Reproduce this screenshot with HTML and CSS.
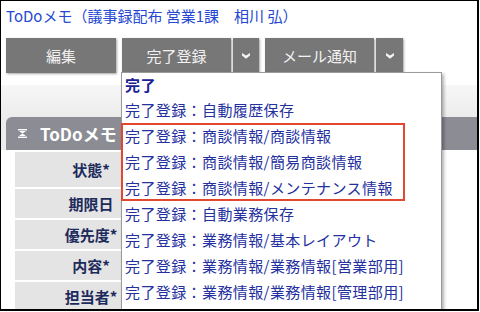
FILE: index.html
```html
<!DOCTYPE html>
<html lang="ja">
<head>
    <meta charset="UTF-8">
    <meta name="viewport" content="width=device-width, initial-scale=1.0">
    <title>ToDoメモ</title>
    <link rel="stylesheet" href="styles.css">
</head>
<body>
  <div class="frame">
    <h1 class="page-title">ToDoメモ（議事録配布 営業1課　相川 弘）</h1>

    <div class="toolbar">
      <button type="button" class="btn btn-edit">編集</button>

      <div class="split">
        <button type="button" class="btn btn-main">完了登録</button>
        <button type="button" class="btn btn-caret">
          <svg width="8" height="6" viewBox="0 0 8 6"><path d="M0 0 L4 2.6 L8 0 L8 2.4 L4 5.8 L0 2.4 Z" fill="#f4f4f4"/></svg>
        </button>

        <div class="menu">
          <div class="menu-item menu-head">完了</div>
          <div class="menu-item">完了登録：自動履歴保存</div>
          <div class="menu-group">
            <div class="menu-item">完了登録：商談情報/商談情報</div>
            <div class="menu-item">完了登録：商談情報/簡易商談情報</div>
            <div class="menu-item">完了登録：商談情報/メンテナンス情報</div>
          </div>
          <div class="menu-item">完了登録：自動業務保存</div>
          <div class="menu-item">完了登録：業務情報/基本レイアウト</div>
          <div class="menu-item">完了登録：業務情報/業務情報[営業部用]</div>
          <div class="menu-item">完了登録：業務情報/業務情報[管理部用]</div>
        </div>
      </div>

      <div class="split">
        <button type="button" class="btn btn-main">メール通知</button>
        <button type="button" class="btn btn-caret btn-caret-wide">
          <svg width="8" height="6" viewBox="0 0 8 6"><path d="M0 0 L4 2.6 L8 0 L8 2.4 L4 5.8 L0 2.4 Z" fill="#f4f4f4"/></svg>
        </button>
      </div>
    </div>

    <div class="band"></div>

    <section class="panel">
      <div class="panel-bar">
        <div class="panel-head">
          <svg class="collapse-icon" width="9" height="9" viewBox="0 0 9 9">
            <rect x="0" y="0" width="9" height="1.4" fill="#fff"/>
            <path d="M1 2 L8 2 L4.5 4.4 Z" fill="#fff"/>
            <path d="M1 7 L8 7 L4.5 4.6 Z" fill="#fff"/>
            <rect x="0" y="7.6" width="9" height="1.4" fill="#fff"/>
          </svg>
          <span>ToDoメモ</span>
        </div>
      </div>

      <div class="rows">
        <div class="row row-first"><div class="label">状態*</div></div>
        <div class="row"><div class="label">期限日</div></div>
        <div class="row"><div class="label">優先度*</div></div>
        <div class="row"><div class="label">内容*</div></div>
        <div class="row"><div class="label">担当者*</div></div>
      </div>
    </section>
  </div>
</body>
</html>
```

FILE: styles.css
```css
body {
    margin: 0;
    padding: 0;
    background-color: #fff;
    font-family: "Noto Sans CJK JP", "Noto Sans", sans-serif;
}
.frame {
    box-sizing: border-box;
    width: 479px;
    height: 311px;
    border: 1px solid #000;
    border-right-width: 2px;
    border-bottom-width: 2px;
    overflow: hidden;
    position: relative;
}
.page-title {
    margin: 0;
    padding: 5px 0 0 5px;
    height: 20px;
    line-height: 20px;
    font-size: 15px;
    font-weight: normal;
    color: #2448d2;
    white-space: nowrap;
}
.toolbar {
    display: flex;
    gap: 6px;
    margin-top: 12px;
    padding-left: 5px;
    height: 35px;
}
.split {
    display: flex;
    gap: 2px;
    position: relative;
}
.btn {
    height: 35px;
    border: none;
    padding: 0;
    margin: 0;
    background-color: #777;
    color: #f2f2f2;
    font-family: "Noto Sans CJK JP", "Noto Sans", sans-serif;
    font-size: 15px;
    box-shadow: 1px 1px 2px rgba(0, 0, 0, 0.35);
    cursor: pointer;
}
.btn-edit {
    width: 110px;
}
.btn-main {
    width: 109px;
}
.btn-caret {
    width: 26px;
    display: flex;
    align-items: center;
    justify-content: center;
}
.btn-caret-wide {
    width: 27px;
}
.menu {
    position: absolute;
    top: 34px;
    left: -1px;
    width: 321px;
    height: 260px;
    box-sizing: border-box;
    background-color: #fff;
    border: 1px solid #9a9a9a;
    box-shadow: 2px 2px 3px rgba(0, 0, 0, 0.3);
    z-index: 5;
}
.menu-item {
    height: 26px;
    line-height: 26px;
    padding-left: 3px;
    font-size: 15px;
    letter-spacing: 0.4px;
    color: #2430a0;
    white-space: nowrap;
}
.menu-head {
    height: 24px;
    line-height: 24px;
    font-weight: bold;
    color: #1a2194;
}
.menu-group {
    width: 284px;
    margin-left: -1px;
    outline: 2px solid #e2472f;
    outline-offset: -2px;
}
.menu-group .menu-item {
    padding-left: 4px;
}
.band {
    margin-top: 12px;
    height: 32px;
    background: linear-gradient(to bottom, #f7f7f7, #ececec);
}
.panel-bar {
    background-color: #ececec;
    padding-left: 5px;
}
.panel-head {
    height: 33px;
    display: flex;
    align-items: center;
    background-color: #8b8c94;
    border-top-left-radius: 6px;
    color: #fff;
    font-size: 17px;
    font-weight: bold;
}
.collapse-icon {
    margin-left: 12px;
    margin-right: 13px;
}
.rows {
    padding: 2px 0 0 14px;
}
.row {
    width: 152px;
    height: 29px;
    margin-bottom: 2px;
    background-color: #e4e4e4;
    display: flex;
    align-items: center;
    justify-content: center;
}
.row-first {
    height: 35px;
}
.label {
    font-size: 15px;
    font-weight: bold;
    color: #1d2b5c;
}
```
